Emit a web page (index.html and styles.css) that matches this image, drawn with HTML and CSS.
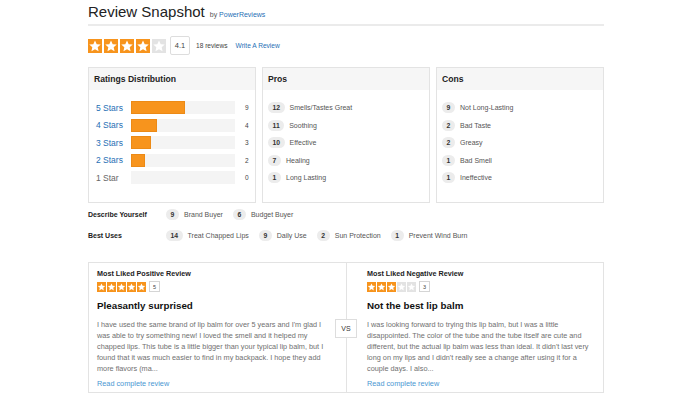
FILE: index.html
```html
<!DOCTYPE html>
<html lang="en">
<head>
  <meta charset="UTF-8" />
  <title>Review Snapshot</title>
  <link rel="stylesheet" href="styles.css">
</head>
<body>
  <svg width="0" height="0" class="defs">
    <symbol id="star" viewBox="0 0 24 24">
      <polygon points="12,2.5 14.9,8.9 21.8,9.5 16.6,14.1 18.1,21 12,17.4 5.9,21 7.4,14.1 2.2,9.5 9.1,8.9" fill="#fff"/>
    </symbol>
  </svg>

  <div class="snapshot">
    <div class="header">
      <h1>Review Snapshot</h1>
      <span class="by">by <a href="#">PowerReviews</a></span>
    </div>

    <div class="summary">
      <div class="stars big">
        <span class="star on"><svg><use href="#star"/></svg></span>
        <span class="star on"><svg><use href="#star"/></svg></span>
        <span class="star on"><svg><use href="#star"/></svg></span>
        <span class="star on"><svg><use href="#star"/></svg></span>
        <span class="star"><svg><use href="#star"/></svg></span>
      </div>
      <span class="score">4.1</span>
      <span class="count">18 reviews</span>
      <a href="#" class="write">Write A Review</a>
    </div>

    <div class="panels">
      <div class="panel">
        <div class="panel-head">Ratings Distribution</div>
        <div class="panel-body">
          <div class="dist-row"><a href="#">5 Stars</a><div class="track"><div class="fill" style="width:50%"></div></div><span>9</span></div>
          <div class="dist-row"><a href="#">4 Stars</a><div class="track"><div class="fill" style="width:23%"></div></div><span>4</span></div>
          <div class="dist-row"><a href="#">3 Stars</a><div class="track"><div class="fill" style="width:17.5%"></div></div><span>3</span></div>
          <div class="dist-row"><a href="#">2 Stars</a><div class="track"><div class="fill" style="width:11.5%"></div></div><span>2</span></div>
          <div class="dist-row"><span class="none">1 Star</span><div class="track"></div><span>0</span></div>
        </div>
      </div>
      <div class="panel">
        <div class="panel-head">Pros</div>
        <div class="panel-body list">
          <div class="tag"><b>12</b>Smells/Tastes Great</div>
          <div class="tag"><b>11</b>Soothing</div>
          <div class="tag"><b>10</b>Effective</div>
          <div class="tag"><b>7</b>Healing</div>
          <div class="tag"><b>1</b>Long Lasting</div>
        </div>
      </div>
      <div class="panel">
        <div class="panel-head">Cons</div>
        <div class="panel-body list">
          <div class="tag"><b>9</b>Not Long-Lasting</div>
          <div class="tag"><b>2</b>Bad Taste</div>
          <div class="tag"><b>2</b>Greasy</div>
          <div class="tag"><b>1</b>Bad Smell</div>
          <div class="tag"><b>1</b>Ineffective</div>
        </div>
      </div>
    </div>

    <div class="tag-row">
      <div class="tag-label">Describe Yourself</div>
      <div class="tag"><b>9</b>Brand Buyer</div>
      <div class="tag"><b>6</b>Budget Buyer</div>
    </div>
    <div class="tag-row">
      <div class="tag-label">Best Uses</div>
      <div class="tag"><b>14</b>Treat Chapped Lips</div>
      <div class="tag"><b>9</b>Daily Use</div>
      <div class="tag"><b>2</b>Sun Protection</div>
      <div class="tag"><b>1</b>Prevent Wind Burn</div>
    </div>

    <div class="reviews">
      <div class="review">
        <div class="review-kind">Most Liked Positive Review</div>
        <div class="review-rating">
          <div class="stars small">
            <span class="star on"><svg><use href="#star"/></svg></span>
            <span class="star on"><svg><use href="#star"/></svg></span>
            <span class="star on"><svg><use href="#star"/></svg></span>
            <span class="star on"><svg><use href="#star"/></svg></span>
            <span class="star on"><svg><use href="#star"/></svg></span>
          </div>
          <span class="mini-score">5</span>
        </div>
        <h2>Pleasantly surprised</h2>
        <p>I have used the same brand of lip balm for over 5 years and I'm glad I was able to try something new! I loved the smell and it helped my chapped lips. This tube is a little bigger than your typical lip balm, but I found that it was much easier to find in my backpack. I hope they add more flavors (ma...</p>
        <a href="#" class="read">Read complete review</a>
      </div>
      <div class="review right">
        <div class="review-kind">Most Liked Negative Review</div>
        <div class="review-rating">
          <div class="stars small">
            <span class="star on"><svg><use href="#star"/></svg></span>
            <span class="star on"><svg><use href="#star"/></svg></span>
            <span class="star on"><svg><use href="#star"/></svg></span>
            <span class="star"><svg><use href="#star"/></svg></span>
            <span class="star"><svg><use href="#star"/></svg></span>
          </div>
          <span class="mini-score">3</span>
        </div>
        <h2>Not the best lip balm</h2>
        <p>I was looking forward to trying this lip balm, but I was a little disappointed. The color of the tube and the tube itself are cute and different, but the actual lip balm was less than ideal. It didn't last very long on my lips and I didn't really see a change after using it for a couple days. I also...</p>
        <a href="#" class="read">Read complete review</a>
      </div>
      <span class="vs">VS</span>
    </div>
  </div>
</body>
</html>
```

FILE: styles.css
```css
body {
  margin: 0;
  font-family: 'Liberation Sans', Arial, sans-serif;
  color: #333;
  background: #fff;
}
a {
  color: #1f6fb5;
  text-decoration: none;
}
.defs {
  position: absolute;
}
.snapshot {
  width: 516px;
  margin-left: 88px;
}
.header {
  display: flex;
  align-items: baseline;
  gap: 5px;
  height: 24px;
  border-bottom: 2px solid #ebebeb;
}
.header h1 {
  margin: 0;
  font-size: 15px;
  font-weight: normal;
  color: #222;
  line-height: 24px;
}
.by {
  font-size: 7px;
  color: #555;
}
.summary {
  display: flex;
  align-items: center;
  margin-top: 10px;
  height: 19px;
  font-size: 6.6px;
}
.stars {
  display: flex;
}
.star {
  display: flex;
  background: #e3e3e3;
}
.star.on {
  background: #f7941d;
}
.star svg {
  width: 100%;
  height: 100%;
}
.stars.big {
  gap: 2px;
}
.stars.big .star {
  width: 14px;
  height: 14px;
}
.score {
  margin-left: 4px;
  width: 18px;
  height: 17px;
  border: 1px solid #ddd;
  border-radius: 2px;
  display: flex;
  align-items: center;
  justify-content: center;
  font-size: 7.5px;
  color: #444;
}
.count {
  margin-left: 6px;
  color: #444;
}
.write {
  margin-left: 8px;
}
.panels {
  display: flex;
  gap: 6px;
  margin-top: 12px;
}
.panel {
  flex: 1;
  height: 134px;
  border: 1px solid #e3e3e3;
}
.panel-head {
  height: 22px;
  line-height: 22px;
  padding-left: 5px;
  background: #f6f6f6;
  font-size: 8.6px;
  font-weight: bold;
  color: #222;
}
.panel-body {
  padding: 9px 0 0 7px;
}
.dist-row {
  display: flex;
  align-items: center;
  height: 17.5px;
  font-size: 8.5px;
}
.dist-row a,
.dist-row .none {
  width: 35px;
}
.dist-row .none {
  color: #666;
}
.dist-row span:last-child {
  font-size: 6.5px;
  color: #444;
  margin-left: 10px;
}
.track {
  width: 104px;
  height: 13px;
  background: #f4f4f4;
}
.fill {
  height: 11px;
  background: #f7941d;
  border: 1px solid #ec8a16;
}
.panel-body.list {
  padding-left: 5px;
}
.tag {
  display: flex;
  align-items: center;
  height: 17.5px;
  font-size: 7px;
  color: #555;
}
.tag b {
  min-width: 4px;
  height: 11px;
  padding: 0 4.5px;
  margin-right: 5px;
  border-radius: 6px;
  background: #ececec;
  color: #333;
  font-size: 6.8px;
  display: flex;
  align-items: center;
  justify-content: center;
}
.tag-row {
  display: flex;
  align-items: center;
  gap: 10px;
  height: 21px;
}
.tag-row .tag-label {
  width: 68px;
  font-size: 7px;
  font-weight: bold;
  color: #222;
}
.panels + .tag-row {
  margin-top: 1px;
}
.reviews {
  position: relative;
  display: flex;
  margin-top: 16px;
  height: 129px;
  border: 1px solid #e3e3e3;
}
.review {
  box-sizing: border-box;
  width: 257px;
  padding: 6px 20px 0 8px;
}
.review.right {
  flex: 1;
  border-left: 1px solid #e3e3e3;
  padding-left: 20px;
  padding-right: 10px;
}
.review-kind {
  font-size: 7.2px;
  font-weight: bold;
  color: #222;
}
.review-rating {
  display: flex;
  align-items: center;
  margin-top: 3px;
}
.stars.small {
  gap: 1px;
}
.stars.small .star {
  width: 9px;
  height: 10px;
}
.mini-score {
  margin-left: 3px;
  width: 9px;
  height: 9px;
  border: 1px solid #d5d5d5;
  display: flex;
  align-items: center;
  justify-content: center;
  font-size: 5.5px;
  color: #444;
}
.review h2 {
  margin: 7px 0 6px;
  font-size: 9.8px;
  line-height: 14px;
  color: #111;
}
.review p {
  margin: 0;
  font-size: 7.3px;
  line-height: 11px;
  color: #707070;
}
.read {
  display: block;
  margin-top: 5px;
  font-size: 7.3px;
  color: #4a97d2;
}
.vs {
  position: absolute;
  left: 246px;
  top: 56px;
  width: 20px;
  height: 17px;
  border: 1px solid #ddd;
  background: #fff;
  display: flex;
  align-items: center;
  justify-content: center;
  font-size: 7px;
  color: #333;
}
```
